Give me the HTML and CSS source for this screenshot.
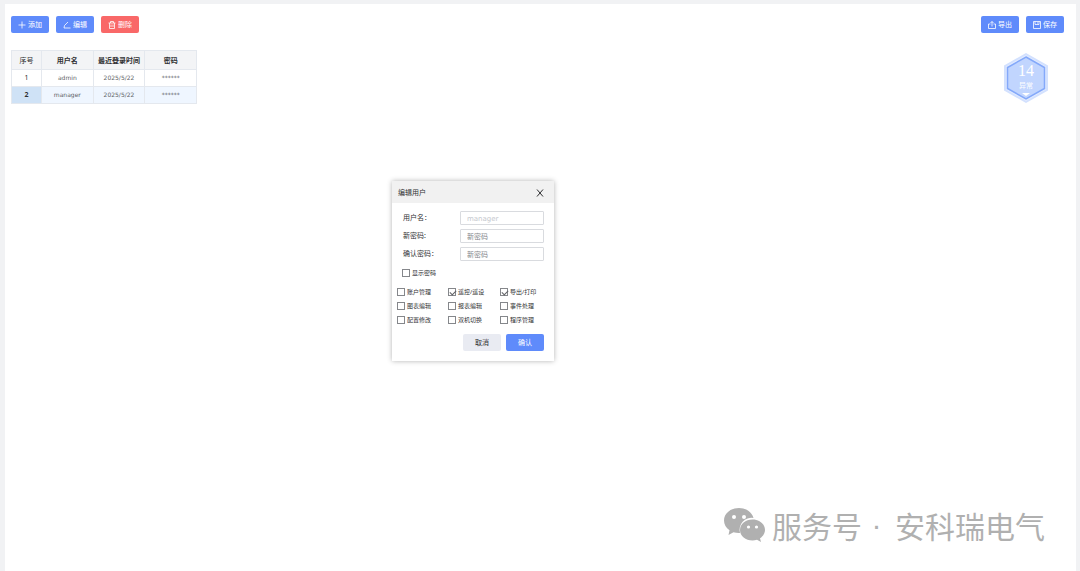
FILE: index.html
```html
<!DOCTYPE html>
<html lang="zh-CN">
<head>
<meta charset="utf-8">
<title>用户管理</title>
<link rel="stylesheet" href="styles.css">
</head>
<body>
<main class="page">
  <header class="toolbar">
    <div class="group">
      <button class="btn" type="button"><svg class="icon" viewBox="0 0 16 16"><path d="M8 1v14M1 8h14"/></svg>添加</button>
      <button class="btn" type="button"><svg class="icon" viewBox="0 0 16 16"><path d="M2 14h13M10 2 3 9l-1 5"/></svg>编辑</button>
      <button class="btn btn-danger" type="button"><svg class="icon" viewBox="0 0 16 16"><path d="M1 4h14M5 4V1h6v3M3 4v11h10V4M6 7v5M10 7v5"/></svg>删除</button>
    </div>
    <div class="group">
      <button class="btn" type="button"><svg class="icon" viewBox="0 0 16 16"><path d="M5 6H1v9h14V6h-4M8 11V1M5 4l3-3 3 3"/></svg>导出</button>
      <button class="btn" type="button"><svg class="icon" viewBox="0 0 16 16"><path d="M1 1h14v14H1zM4 1v6h8V1M9 3v2"/></svg>保存</button>
    </div>
  </header>

  <table class="users">
    <thead>
      <tr><th class="index" scope="col">序号</th><th scope="col">用户名</th><th scope="col">最近登录时间</th><th scope="col">密码</th></tr>
    </thead>
    <tbody>
      <tr><td class="index">1</td><td>admin</td><td>2025/5/22</td><td>******</td></tr>
      <tr class="selected"><td class="index">2</td><td>manager</td><td>2025/5/22</td><td>******</td></tr>
    </tbody>
  </table>
</main>

<aside class="alarm">
  <svg class="alarm-shape" viewBox="0 0 44 50">
    <path d="M22 0 44 12.500V37.500L22 50 0 37.500V12.500z" fill="#d3e1fe"/>
    <path d="M22 2 42 13.500V36.500L22 48 2 36.500V13.500z" fill="#e2ebff"/>
    <path d="M22 4 40.500 14.500V35.500L22 46 3.500 35.500V14.500z" fill="#c1d5fe" stroke="#84a9fa" stroke-width="1.500"/>
    <path d="M18 40h8l-4 3z" fill="#fff"/>
  </svg>
  <span class="alarm-count">14</span>
  <span class="alarm-label">异常</span>
</aside>

<form class="dialog" role="dialog" aria-labelledby="dialog-title">
  <div class="dialog-head">
    <h1 class="dialog-title" id="dialog-title">编辑用户</h1>
    <button class="close" type="button" aria-label="关闭"><svg class="close-icon" viewBox="0 0 8 8"><path d="M1 .5 7 7.500M7 .5 1 7.500"/></svg></button>
  </div>
  <div class="fields">
    <label for="name">用户名：</label><input class="field" id="name" type="text" value="manager" disabled>
    <label for="pass">新密码:</label><input class="field" id="pass" type="password" placeholder="新密码">
    <label for="again">确认密码：</label><input class="field" id="again" type="password" placeholder="新密码">
  </div>
  <label class="check show"><input class="box" type="checkbox">显示密码</label>
  <div class="rights">
    <label class="check"><input class="box" type="checkbox">账户管理</label>
    <label class="check"><input class="box" type="checkbox" checked>遥控/遥设</label>
    <label class="check"><input class="box" type="checkbox" checked>导出/打印</label>
    <label class="check"><input class="box" type="checkbox">图表编辑</label>
    <label class="check"><input class="box" type="checkbox">报表编辑</label>
    <label class="check"><input class="box" type="checkbox">事件处理</label>
    <label class="check"><input class="box" type="checkbox">配置修改</label>
    <label class="check"><input class="box" type="checkbox">双机切换</label>
    <label class="check"><input class="box" type="checkbox">程序管理</label>
  </div>
  <div class="actions">
    <button class="btn btn-plain" type="button">取消</button>
    <button class="btn" type="button">确认</button>
  </div>
</form>

<div class="watermark">
  <svg class="wechat" viewBox="0 0 42 34">
    <path d="M15 0C6.500 0 0 5.500 0 12.500c0 4 2 7.300 5.500 9.700L4.500 27l5-2.700c2 .6 4 .8 6.500.7A12 12 0 0 1 29.500 10C28 4 22 0 15 0z" fill="#b0b0b0"/>
    <path d="M28.500 11.500C21.500 11.500 16 16 16 22s5.500 10.500 12.500 10.500c1.500 0 3-.2 4.500-.7l4 2.200-1-3.700c3-2 5-5 5-8.300 0-6-5.500-10.500-12.500-10.500z" fill="#b0b0b0"/>
    <g fill="#fff"><circle cx="10" cy="9" r="2"/><circle cx="20" cy="9" r="2"/><circle cx="24.500" cy="19" r="1.600"/><circle cx="32.500" cy="19" r="1.600"/></g>
  </svg>
  <span>服务号</span><span class="dot">·</span><span>安科瑞电气</span>
</div>
</body>
</html>
```
FILE: styles.css
```css
* { box-sizing: border-box; }

body {
  margin: 0;
  min-height: 100vh;
  display: flex;
  padding: 4px 4px 0 5px;
  background: #f1f2f4;
  color: #303133;
  font: 7px/10px "Noto Sans", "Noto Sans CJK SC", sans-serif;
}

button, input { font: inherit; }

.page { flex: 1; padding: 12px 12px 0 6px; background: #fff; }

.toolbar { display: flex; justify-content: space-between; margin-bottom: 17px; }
.group { display: flex; gap: 7px; }

.btn {
  display: flex;
  align-items: center;
  justify-content: center;
  gap: 2px;
  width: 38px;
  height: 17px;
  padding: 1px 0 0;
  border: 0;
  border-radius: 2px;
  background: #5f8bfb;
  color: #fff;
}
.btn-danger { background: #f96868; }
.btn-plain { background: #e9ebf2; color: #303133; }

.icon { width: 8px; height: 8px; fill: none; stroke: #fff; stroke-width: 1.6; }

.users { border-collapse: collapse; table-layout: fixed; width: 186px; text-align: center; }
.users th, .users td { height: 17px; padding: 0; border: 1px solid #e4e8ee; }
.users th { height: 19px; padding-top: 1px; background: #f3f4f6; font-weight: 700; }
.users td { color: #606266; font: 6px/8px "DejaVu Sans", sans-serif; }
.users .index { width: 30px; color: #303133; }
.users td.index { font: 7px/10px "Noto Sans", sans-serif; }
.users th.index { font-weight: 400; }
.users .selected td { background: #eff6ff; }
.users .selected .index { background: #cfe2f6; font-weight: 700; }

.alarm {
  position: absolute;
  top: 53px;
  right: 32px;
  width: 44px;
  height: 50px;
  display: flex;
  flex-direction: column;
  align-items: center;
  padding-top: 10px;
  color: #fff;
}
.alarm-shape { position: absolute; inset: 0; }
.alarm-count { position: relative; font: 16px/16px "Liberation Serif", serif; }
.alarm-label { position: relative; line-height: 14px; }

.dialog {
  position: absolute;
  left: 392px;
  top: 181px;
  width: 162px;
  padding-bottom: 10px;
  background: #fff;
  box-shadow: 0 0 5px rgba(0, 0, 0, .3);
}
.dialog-head {
  display: flex;
  align-items: center;
  justify-content: space-between;
  height: 22px;
  padding: 1px 10px 0 6px;
  background: #f1f1f1;
}
.dialog-title { margin: 0; font-size: 7px; font-weight: 400; }
.close { display: flex; padding: 0; border: 0; background: none; }
.close-icon { width: 8px; height: 8px; fill: none; stroke: #303133; stroke-width: 1; }

.fields {
  display: grid;
  grid-template-columns: 57px 1fr;
  align-items: center;
  row-gap: 4px;
  padding: 8px 10px 0 11px;
}
.field {
  width: 100%;
  height: 14px;
  padding: 1px 6px 0;
  border: 1px solid #d9dbdf;
  border-radius: 1px;
  background: #fff;
  color: #303133;
  font-family: "DejaVu Sans", "Noto Sans CJK SC", sans-serif;
}
.field:disabled { color: #c5c8ce; }
.field::placeholder { color: #85878b; }

.check { display: flex; align-items: center; gap: 2px; font-size: 6px; white-space: nowrap; }
.show { padding: 7px 10px 0; }
.rights {
  display: grid;
  grid-template-columns: 51px 52px 1fr;
  row-gap: 4px;
  padding: 9px 5px 0;
}
.box {
  appearance: none;
  display: grid;
  flex: none;
  width: 8px;
  height: 8px;
  margin: 0;
  border: 1px solid #85878b;
  background: #fff;
}
.box:checked::before {
  content: "";
  width: 5px;
  height: 3px;
  border: solid #606266;
  border-width: 0 0 1px 1px;
  transform: rotate(-45deg);
  margin: 1px 0 0 1px;
}

.actions { display: flex; justify-content: flex-end; gap: 5px; padding: 9px 10px 0; }

.watermark {
  position: absolute;
  right: 35px;
  bottom: 26px;
  display: flex;
  align-items: center;
  color: #b0b0b0;
  font: 30px/40px "Noto Sans CJK SC", sans-serif;
}
.wechat { width: 42px; height: 34px; margin-right: 6px; }
.dot { width: 33px; padding-right: 4px; text-align: center; font-family: "Liberation Sans", sans-serif; }
```
